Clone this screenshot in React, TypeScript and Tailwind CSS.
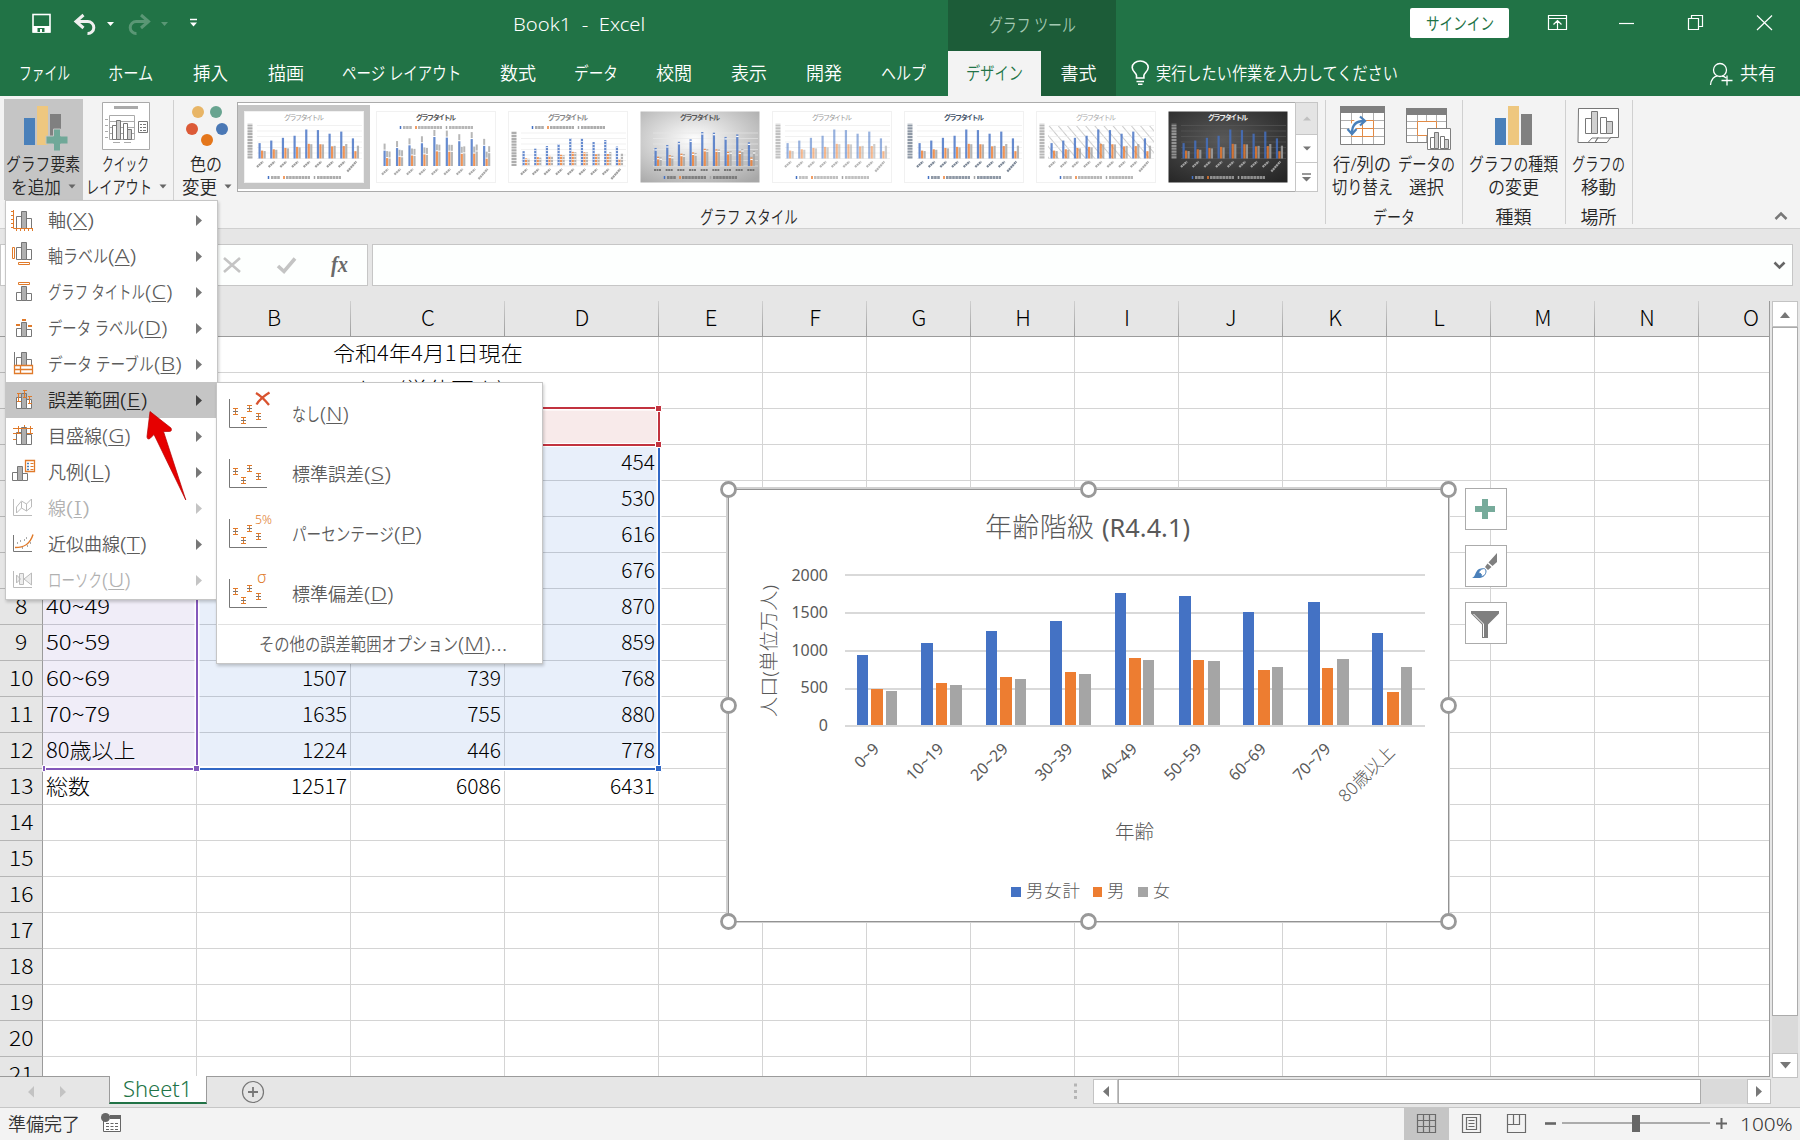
import React, { useLayoutEffect, useRef, useState } from 'react';

const UI = "font-['Noto_Sans','Noto_Sans_CJK_JP',sans-serif] font-[350]";
const CELL = "font-['Noto_Sans_CJK_JP',sans-serif] font-light";

/* One line of text, condensed or widened to an exact advance width. */
function Fit({ w, children, className = '' }: { w: number; children: React.ReactNode; className?: string }) {
  const ref = useRef<HTMLSpanElement>(null);
  const [scale, setScale] = useState(1);
  useLayoutEffect(() => {
    if (ref.current) setScale(w / ref.current.offsetWidth);
  }, [w]);
  return (
    <span className={'inline-flex shrink-0 items-center whitespace-nowrap leading-none ' + className} style={{ width: w }}>
      <span ref={ref} className="inline-block origin-left" style={{ transform: `scaleX(${scale})` }}>
        {children}
      </span>
    </span>
  );
}

const Gap = ({ w }: { w: number }) => <span className="shrink-0" style={{ width: w }} />;

/* ---------- Title bar and tabs ---------- */

function TitleBar() {
  return (
    <div className="flex h-[51px] text-white">
      <svg className="shrink-0" width="513" height="51" fill="none">
        <rect x="33" y="14.500" width="17" height="17.500" stroke="#fff" strokeWidth="1.600" />
        <path d="M33 26h17v6.500H33z" fill="#fff" />
        <path d="M37.500 28h7v4h-2.500v-3h-2v3h-2.500z" fill="#217346" />
        <path d="M83.500 15l-7.500 6.500 7.500 6.500M76.500 21.500h11a6 6 0 0 1 6.300 6.200 6 6 0 0 1-6.300 5.800" stroke="#f0f0f0" strokeWidth="3" />
        <path d="M107 22h7l-3.500 4z" fill="#fff" />
        <path d="M141 15l7.500 6.500-7.500 6.500M148 21.500h-11.500a6 6 0 0 0-6.300 6.200 6 6 0 0 0 6.300 5.800" stroke="#5a9775" strokeWidth="3" />
        <path d="M161 22h7l-3.500 4z" fill="#5a9775" />
        <path d="M190 19.500h7" stroke="#fff" strokeWidth="1.500" />
        <path d="M190 22.500h7l-3.500 4z" fill="#fff" />
      </svg>
      <div className="flex w-[435px] items-center pb-[2px] text-[19px]">
        <Fit w={132} className="whitespace-pre">{'Book1  -  Excel'}</Fit>
      </div>
      <div className="flex w-[168px] items-center justify-center bg-[#1c5c38] pb-[2px] text-[18px] text-[#a3c9b2]">
        <Fit w={87}>グラフ ツール</Fit>
      </div>
      <div className="w-[294px]" />
      <div className="mt-[8px] flex h-[30px] w-[99px] items-center justify-center rounded-[2px] bg-white text-[17px] font-normal text-[#217346]">
        <Fit w={68}>サインイン</Fit>
      </div>
      <svg className="shrink-0" width="291" height="51" viewBox="1509 0 291 51" fill="none" stroke="#fff" strokeWidth="1.200">
        <path d="M1548.500 15.500h18v14h-18zM1548.500 18.500h18M1557.500 29v-8M1553.500 24.500l4-4 4 4" />
        <path d="M1619 23.500h15" />
        <path d="M1688.500 18.500h10v11h-10zM1691.500 18v-2.500h11v11h-3.500" />
        <path d="M1757 15.500l15 14.500M1772 15.500l-15 14.500" />
      </svg>
    </div>
  );
}

const TABS: [string, number, number][] = [
  ['ファイル', 19, 51], ['ホーム', 38, 45], ['挿入', 40, 35], ['描画', 40, 36], ['ページ レイアウト', 38, 119], ['数式', 39, 36],
  ['データ', 38, 44], ['校閲', 38, 36], ['表示', 39, 36], ['開発', 39, 36], ['ヘルプ', 39, 45],
];

function TabBar() {
  return (
    <div className="flex h-[45px] items-stretch text-[18px] text-white">
      <div className="flex w-[948px] items-center pb-[2px]">
        {TABS.map(([label, gap, w]) => (
          <React.Fragment key={label}>
            <Gap w={gap} />
            <Fit w={w}>{label}</Fit>
          </React.Fragment>
        ))}
      </div>
      <div className="flex w-[93px] items-center justify-center bg-[#f3f3f3] pb-[2px] text-[#217346]"><Fit w={57}>デザイン</Fit></div>
      <div className="flex w-[75px] items-center justify-center bg-[#1c5c38] pb-[2px]"><Fit w={36}>書式</Fit></div>
      <svg className="shrink-0" width="40" height="45" viewBox="1116 51 40 45" fill="none" stroke="#fff" strokeWidth="1.600">
        <path d="M1136.500 78v-2.500c0-2.500-4.300-4-4.300-8a7.800 6.300 0 0 1 16 0c0 4-4.300 5.500-4.300 8V78zM1136.500 81.500h7.500M1138 84.300h4.500" />
      </svg>
      <Fit w={242} className="pb-[2px]">実行したい作業を入力してください</Fit>
      <svg className="ml-auto shrink-0" width="40" height="45" viewBox="1700 51 40 45" fill="none" stroke="#fff" strokeWidth="1.300">
        <circle cx="1720" cy="70" r="6.500" />
        <path d="M1710.500 85c.5-6 4-9 7-9.200M1722 76c2 .3 3 1 4 2M1727 75.500v10M1721.500 80.500h11" />
      </svg>
      <Fit w={36} className="mr-[24px] pb-[2px]">共有</Fit>
    </div>
  );
}

/* ---------- Ribbon ---------- */

const TOTAL = [935, 1090, 1256, 1382, 1762, 1726, 1507, 1635, 1224];
const MALE = [481, 560, 640, 706, 892, 867, 739, 755, 446];
const FEMALE = [454, 530, 616, 676, 870, 859, 768, 880, 778];

type Look = { title: string; text: string; legendTop?: boolean; kind?: string };
const LOOKS: Look[] = [
  { title: '#999', text: '#777' },
  { title: '#555', text: '#888', legendTop: true, kind: 'labels' },
  { title: '#888', text: '#777', legendTop: true, kind: 'dash' },
  { title: '#555', text: '#555', kind: 'grey' },
  { title: '#999', text: '#999', kind: 'pale' },
  { title: '#44546a', text: '#44546a' },
  { title: '#aaa', text: '#888', kind: 'hatch' },
  { title: '#eee', text: '#ccc', kind: 'dark' },
];

function Thumb({ look, id }: { look: Look; id: number }) {
  const dark = look.kind === 'dark';
  const shaded = dark || look.kind === 'grey';
  const base = look.legendTop || look.kind === 'grey' ? 55 : 47.5;
  const span = look.kind === 'labels' ? 29 : look.legendTop ? 28 : look.kind === 'grey' ? 34 : 29;
  const left = look.kind === 'labels' ? 6 : 13;
  const step = (118 - left) / 9;
  const data = [TOTAL, MALE, FEMALE];
  const cols = ['#4472c4', '#ed7d31', '#a5a5a5'];
  return (
    <svg width="120" height="72" viewBox="0 0 120 72" className="shrink-0">
      <defs>
        <radialGradient id={'bg' + id} cx="0.45" cy="0.4" r="0.75">
          <stop offset="0" stopColor={dark ? '#595959' : '#fff'} />
          <stop offset="1" stopColor={dark ? '#262626' : '#a8a8a8'} />
        </radialGradient>
        <pattern id={'hatch' + id} width="7" height="7" patternUnits="userSpaceOnUse" patternTransform="rotate(-40)">
          <path d="M0 0V7" stroke="#ccc" strokeWidth="2" />
        </pattern>
      </defs>
      <rect x="0.500" y="0.500" width="119" height="71" fill={shaded ? `url(#bg${id})` : '#fff'} stroke={shaded ? 'none' : '#f1f1f1'} />
      {look.kind === 'hatch' && <rect x="12" y="15" width="106" height="33" fill={`url(#hatch${id})`} />}
      {look.kind !== 'labels' &&
        [0, 1, 2, 3, 4, 5, 6].map((n) => (
          <path key={n} d={`M${left} ${base - n * 5.500}H118`} stroke={dark ? '#5a5a5a' : '#e8e8e8'} strokeWidth="0.600" />
        ))}
      {look.kind !== 'labels' && look.kind !== 'grey' && (
        <path d={`M6 ${base}V${base - 35}`} stroke={look.text} strokeWidth="5" strokeDasharray="2.200 0.700" opacity="0.6" />
      )}
      {data.map((serie, j) =>
        serie.map((v, i) => {
          const h = (v / 1762) * span;
          const x = left + 1.500 + i * step + j * 2.500;
          return (
            <g key={i + '-' + j}>
              <rect x={x} y={base - h} width="2.200" height={h} fill={cols[j]} opacity={look.kind === 'pale' ? 0.55 : 0.82} />
              {look.kind === 'dash' && <path d={`M${x + 1.100} ${base}V${base - h}`} stroke="#fff" strokeWidth="2.400" strokeDasharray="0.800 2.200" />}
              {look.kind === 'labels' && <path d={`M${x + 1.100} ${base - h - 1}v-6`} stroke="#999" strokeWidth="2" opacity="0.7" />}
              {look.kind === 'grey' && <path d={`M${x} ${base - h + 2}h2.500`} stroke="#fff" strokeWidth="1.200" />}
            </g>
          );
        }),
      )}
      {TOTAL.map((_, i) => (
        <path key={i} d={look.kind === 'grey' ? `M${left + 1 + i * step} 59h7` : `M${left + i * step - (i === 8 ? 3 : 0)} ${base + (i === 8 ? 13 : 8.500)}L${left + 6 + i * step} ${base + 3}`} stroke={look.text} strokeWidth="2.200" strokeDasharray="2 0.500" opacity="0.7" />
      ))}
      <text x="60" y="9" textAnchor="middle" fontSize="7" fontWeight={look.title === '#999' || look.title === '#aaa' ? 400 : 700} fill={look.title} textLength="40" className="whitespace-pre">グラフ タイトル</text>
      <g transform={look.legendTop ? 'translate(0 -50)' : ''}>
        <path d="M24.500 65v3" stroke="#4472c4" strokeWidth="1.500" />
        <path d="M27 66.500h9M42 66.500h24M73 66.500h24" stroke={look.text} strokeWidth="3" strokeDasharray="2.600 0.500" opacity="0.6" />
        <path d="M40 65v3" stroke="#ed7d31" strokeWidth="1.500" />
        <path d="M70.500 65v3" stroke="#a5a5a5" strokeWidth="1.500" />
      </g>
    </svg>
  );
}

function RibbonButton({ x, w, l1, l2, pad1, pad2, arrow, active, children }: {
  x: number; w: number; l1: [string, number]; l2: [string, number]; pad1: number; pad2: number; arrow?: number; active?: boolean; children: React.ReactNode;
}) {
  return (
    <div className={'flex h-[104px] shrink-0 flex-col text-[18px] text-[#262626] ' + (active ? 'bg-[linear-gradient(#f3f3f3_3px,#c5c5c5_3px)]' : '')} style={{ width: w }}>
      <svg width={w} height="56" viewBox={`${x} 96 ${w} 56`} fill="none" className="shrink-0">{children}</svg>
      <div className="flex h-[23px] items-center"><Gap w={pad1} /><Fit w={l1[1]}>{l1[0]}</Fit></div>
      <div className="flex h-[23px] items-center">
        <Gap w={pad2} />
        <Fit w={l2[1]}>{l2[0]}</Fit>
        {arrow !== undefined && (
          <svg width="8" height="5" style={{ marginLeft: arrow }}><path d="M0.500 0.500h7L4 4.500z" fill="#666" /></svg>
        )}
      </div>
    </div>
  );
}

function Group({ w, label, lw, children }: { w: number; label: string; lw: number; children: React.ReactNode }) {
  return (
    <div className="relative flex h-[132px] shrink-0 flex-col" style={{ width: w }}>
      <div className="flex h-[109px]">{children}</div>
      <div className="flex h-[23px] items-center justify-center pr-[2px] text-[18px] text-[#262626]"><Fit w={lw}>{label}</Fit></div>
      <div className="absolute right-0 top-[4px] h-[124px] w-px bg-[#d0d0d0]" />
    </div>
  );
}

function Ribbon() {
  return (
    <div className="flex h-[133px] border-b border-[#d0d0d0] bg-[#f3f3f3]">
      <div className="relative flex w-[174px] shrink-0 pl-[4px]">
        <RibbonButton x={4} w={79} l1={['グラフ要素', 74]} l2={['を追加', 50]} pad1={2} pad2={7} arrow={7} active>
          <path d="M24 118h11v27H24z" fill="#4a80ba" />
          <path d="M37 106h11v39H37z" fill="#eec77f" />
          <path d="M50 114h11v23H50z" fill="#808080" />
          <path d="M53.500 129h7v7h7.500v8h-7.500v7h-7v-7H46v-8h7.500z" fill="#70a898" stroke="#c5c5c5" />
        </RibbonButton>
        <RibbonButton x={83} w={90} l1={['クイック', 47]} l2={['レイアウト', 66]} pad1={19} pad2={3} arrow={7}>
          <path d="M102.500 102.500h47v47h-47z" fill="#fff" stroke="#aaa" />
          <path d="M114 107.500h24" stroke="#aaa" strokeWidth="3" />
          <path d="M109.500 115.500h25v24h-25zM110 121.500h24M110 127.500h24M110 133.500h24M105 119.500h3M105 125.500h3M105 131.500h3M105 137.500h3M113 142.500h7M124 142.500h7" stroke="#aaa" />
          <path d="M112.500 125.500h4v14h-4zM123.500 123.500h4v16h-4z" fill="#fff" stroke="#777" />
          <path d="M116.500 120.500h4v19h-4zM127.500 129.500h4v10h-4z" fill="#ccc" stroke="#777" />
          <path d="M138.500 121.500h9v11h-9zM140 124.500h2M143 124.500h3M140 127.500h2M143 127.500h3M140 130.500h2M143 130.500h3" stroke="#777" />
        </RibbonButton>
        <div className="absolute right-0 top-[4px] h-[100px] w-px bg-[#d0d0d0]" />
      </div>
      <RibbonButton x={174} w={63} l1={['色の', 32]} l2={['変更', 35]} pad1={16} pad2={8} arrow={7}>
        <circle cx="198" cy="112" r="6" fill="#e8b566" />
        <circle cx="216" cy="112" r="6" fill="#68a490" />
        <circle cx="192" cy="129" r="6" fill="#dc5a37" />
        <circle cx="222" cy="129" r="6" fill="#4a78b5" />
        <circle cx="207" cy="140" r="6" fill="#e4761b" />
      </RibbonButton>
      <div className="relative flex w-[1089px] flex-col">
        <div className="mt-[6px] flex h-[90px] w-[1081px]">
          <div className="flex w-[1060px] items-center border border-[#ababab] bg-white">
            {LOOKS.map((look, i) => (
              <div key={i} className={'flex h-[84px] w-[132px] shrink-0 items-center justify-center ' + (i === 0 ? 'bg-[#c5c5c5]' : '')}>
                <Thumb look={look} id={i} />
              </div>
            ))}
          </div>
          <div className="-ml-px flex w-[23px] flex-col">
            <div className="flex h-[33px] items-center justify-center border border-[#c6c6c6] bg-[#e4e4e4]"><svg width="8" height="5"><path d="M0 4.500h8L4 .5z" fill="#c0c0c0" /></svg></div>
            <div className="-mt-px flex h-[30px] items-center justify-center border border-[#c6c6c6] bg-white"><svg width="8" height="5"><path d="M0 .5h8L4 4.500z" fill="#777" /></svg></div>
            <div className="-mt-px flex h-[30px] items-center justify-center border border-[#c6c6c6] bg-white"><svg width="9" height="9"><path d="M0 1h9" stroke="#777" strokeWidth="1.500" /><path d="M0 4h9L4.500 8.500z" fill="#777" /></svg></div>
          </div>
        </div>
        <div className="mt-[13px] flex h-[23px] items-center pl-[463px] text-[18px] text-[#262626]"><Fit w={98}>グラフ スタイル</Fit></div>
        <div className="absolute right-0 top-[4px] h-[124px] w-px bg-[#d0d0d0]" />
      </div>
      <Group w={137} label="データ" lw={42}>
        <RibbonButton x={1326} w={71} l1={['行/列の', 58]} l2={['切り替え', 61]} pad1={7} pad2={6}>
          <path d="M1340.500 107h44v37.500h-44z" fill="#fff" stroke="#7f7f7f" />
          <path d="M1351.500 112v32M1362.500 112v32M1373.500 112v32M1341 120.500h43M1341 128.500h43M1341 136.500h43" stroke="#b0b0b0" />
          <path d="M1340 106h45v7h-45z" fill="#7f7f7f" />
          <path d="M1351.500 120.500h22v16h-22zM1362.500 121v15M1352 128.500h21" stroke="#e28a45" />
          <path d="M1352 133c0-8 4-12 12-12" stroke="#fff" strokeWidth="6" />
          <path d="M1352 133c0-8 4-12 12-12M1360 116.500l5 4.500-5 4.500M1347.500 129l4.500 5 4.500-5" stroke="#4a80ba" strokeWidth="2.300" />
        </RibbonButton>
        <RibbonButton x={1397} w={58} l1={['データの', 57]} l2={['選択', 35]} pad1={1} pad2={12}>
          <path d="M1406.500 109h40v33.500h-40z" fill="#fff" stroke="#7f7f7f" />
          <path d="M1417.500 114v28M1426.500 114v28M1436.500 114v28M1407 121.500h39M1407 128.500h39M1407 135.500h39" stroke="#b0b0b0" />
          <path d="M1406 108h41v7h-41z" fill="#7f7f7f" />
          <path d="M1417.500 121.500h19v14h-19z" stroke="#e28a45" fill="#fff" />
          <path d="M1427.500 128.500h23v21h-23z" fill="#fff" stroke="#808080" />
          <path d="M1430.500 137.500h4v11h-4zM1440.500 136.500h4v12h-4z" fill="#fff" stroke="#777" />
          <path d="M1434.500 132.500h4v16h-4zM1444.500 139.500h4v9h-4z" fill="#ccc" stroke="#777" />
        </RibbonButton>
      </Group>
      <Group w={103} label="種類" lw={36}>
        <RibbonButton x={1463} w={102} l1={['グラフの種類', 89]} l2={['の変更', 51]} pad1={6} pad2={25}>
          <path d="M1495 118h11v27h-11z" fill="#4a80ba" />
          <path d="M1508 106h11v39h-11z" fill="#eec77f" />
          <path d="M1521 114h11v31h-11z" fill="#808080" />
        </RibbonButton>
      </Group>
      <Group w={67} label="場所" lw={36}>
        <RibbonButton x={1566} w={65} l1={['グラフの', 53]} l2={['移動', 35]} pad1={6} pad2={15}>
          <path d="M1578.500 108.500h40v29h-8l-3.500 5h-12l3-5-3 5h-17z" fill="#fff" stroke="#777" />
          <path d="M1588 142.500l4-4.500h19" stroke="#777" />
          <path d="M1585.500 118.500h6v15h-6zM1600.500 117.500h6v16h-6z" fill="#fff" stroke="#777" />
          <path d="M1591.500 111.500h6v22h-6zM1606.500 121.500h6v12h-6z" fill="#d0d0d0" stroke="#777" />
        </RibbonButton>
      </Group>
      <div className="flex flex-1 items-end justify-end pb-[8px] pr-[12px]">
        <svg width="14" height="9" fill="none"><path d="M1.500 8L7 2.500 12.500 8" stroke="#777" strokeWidth="2.500" /></svg>
      </div>
    </div>
  );
}

function FormulaBar() {
  return (
    <div className="flex h-[57px] shrink-0 pt-[15px]">
      <div className="h-[42px] w-[190px] border border-[#c6c6c6] bg-white" />
      <div className="ml-[4px] h-[42px] w-[174px] border border-[#c6c6c6] bg-[#fdfffe]">
        <svg width="172" height="40" viewBox="195 245 172 40" fill="none">
          <path d="M224 258l16 14M240 258l-16 14" stroke="#c4c4c4" strokeWidth="2.600" />
          <path d="M278 266l6 5.500 11-13" stroke="#c4c4c4" strokeWidth="3.600" />
          <text x="331" y="272" fontSize="23" fontStyle="italic" fontWeight="700" fill="#6a6a6a" textLength="17" lengthAdjust="spacingAndGlyphs" className="font-['Liberation_Serif',serif]">fx</text>
        </svg>
      </div>
      <div className="ml-[4px] flex h-[42px] w-[1421px] items-center justify-end border border-[#c6c6c6] bg-[#fdfffe] pr-[6px]">
        <svg width="13" height="9" fill="none"><path d="M1.500 1.500l5 5 5-5" stroke="#666" strokeWidth="2.600" /></svg>
      </div>
    </div>
  );
}

/* ---------- Worksheet ---------- */

const COLS: [string, number][] = [
  ['A', 154], ['B', 154], ['C', 154], ['D', 154], ['E', 104], ['F', 104], ['G', 104], ['H', 104], ['I', 104], ['J', 104], ['K', 104],
  ['L', 104], ['M', 104], ['N', 104], ['O', 71],
];
const AGES = ['0~9', '10~19', '20~29', '30~39', '40~49', '50~59', '60~69', '70~79', '80歳以上'];

function cell(row: number, col: number): React.ReactNode {
  if (row >= 4 && row <= 12) {
    const i = row - 4;
    /* Cells that lie fully behind the open menus stay empty. */
    if ((col === 0 && row < 8) || (col < 3 && col > 0 && row < 10)) return '';
    if (col === 0) return <Fit w={row === 12 ? 89 : 64}>{AGES[i]}</Fit>;
    return [0, TOTAL[i], MALE[i], FEMALE[i]][col] ?? '';
  }
  if (row === 13) return [<Fit key="sum" w={44}>総数</Fit>, '12517', '6086', '6431'][col] ?? '';
  return '';
}

function fill(row: number, col: number): string {
  if (row >= 4 && row <= 12 && col === 0) return 'bg-[#f0edf8] border-[#c5c3cf]';
  if (row >= 4 && row <= 12 && col <= 3) return 'bg-[#e8effa] border-[#c0c7d2]';
  if (row === 3 && col >= 1 && col <= 3) return 'bg-[#f8eaea] border-[#d4d4d4]';
  return 'border-[#d4d4d4]';
}

function Sheet() {
  return (
    <div className={'h-[776px] w-[1770px] shrink-0 overflow-hidden border-r border-[#9b9b9b] bg-white text-black ' + CELL}>
      <div className="flex h-[36px] border-b border-[#9b9b9b] bg-[#e6e6e6] text-[22px]">
        <div className="w-[43px] shrink-0 border-r border-[#bbb]" />
        {COLS.map(([name, w]) => (
          <div key={name} className="flex shrink-0 items-center justify-center bg-[linear-gradient(#d0d0d0,#9b9b9b)] bg-[length:1px_100%] bg-right bg-no-repeat pb-[5px] leading-none" style={{ width: name === 'O' ? 104 : w }}>
            {name}
          </div>
        ))}
      </div>
      {Array.from({ length: 21 }, (_, k) => k + 1).map((row) => (
        <div key={row} className="flex h-[36px] text-[21px] leading-none">
          <div className="flex w-[43px] shrink-0 items-center justify-center border-b border-r border-b-[#b5b5b5] border-r-[#9b9b9b] bg-[#e6e6e6] pb-[3px]">
            <Fit w={row < 10 ? 12 : 24}>{row}</Fit>
          </div>
          {COLS.map(([name, w], col) => {
            if (row <= 2 && (col === 2 || col === 3)) return null;
            if (row <= 2 && col === 1)
              return (
                <div key={name} className="flex w-[462px] shrink-0 items-center justify-center border-b border-r border-[#d4d4d4] pb-[5px] pl-[1px]">
                  <Fit w={row === 1 ? 190 : 152}>{row === 1 ? '令和4年4月1日現在' : '人口(単位万人)'}</Fit>
                </div>
              );
            return (
              <div key={name} className={'flex shrink-0 items-center border-b border-r pb-[3px] ' + (col ? 'justify-end pr-[3px] ' : 'pl-[3px] ') + fill(row, col)} style={{ width: w }}>
                {cell(row, col)}
              </div>
            );
          })}
        </div>
      ))}
    </div>
  );
}

function RangeOutlines() {
  return (
    <svg className="pointer-events-none absolute left-0 top-0" width="700" height="800" fill="none">
      <path d="M199 768.500H659M659 447V768" stroke="#fff" strokeWidth="5" />
      <path d="M199 769H659V447" stroke="#3168c6" strokeWidth="2" />
      <path d="M44 768.500H197V440" stroke="#fff" strokeWidth="5" />
      <path d="M44 769H197V440" stroke="#8458bb" strokeWidth="2" />
      <path d="M197 408.500H659V445H197z" stroke="#fff" strokeWidth="4" />
      <path d="M197 408H659V445H197z" stroke="#c2333f" strokeWidth="2" />
      <path d="M655.500 405.500h6v6h-6zM655.500 441.500h6v6h-6z" fill="#c2333f" stroke="#fff" />
      <path d="M655.500 765.500h6v6h-6z" fill="#3168c6" stroke="#fff" />
      <path d="M193.500 765.500h6v6h-6zM42.500 765.500h3v6h-3z" fill="#8458bb" stroke="#fff" />
    </svg>
  );
}

function VScroll() {
  return (
    <div className="ml-[2px] flex h-[777px] w-[26px] flex-col bg-[#dadada]">
      <div className="flex h-[26px] items-center justify-center border border-[#c3c3c3] bg-white"><svg width="10" height="7"><path d="M0 7h10L5 1z" fill="#777" /></svg></div>
      <div className="h-[689px] border border-[#ababab] bg-white" />
      <div className="flex-1" />
      <div className="flex h-[25px] items-center justify-center border border-[#c3c3c3] bg-white"><svg width="11" height="7"><path d="M0 0h11L5.500 6.500z" fill="#777" /></svg></div>
    </div>
  );
}

/* ---------- Chart object ---------- */

function Chart() {
  const y = (v: number) => 725 - (v / 2000) * 150;
  return (
    <svg className="absolute left-[718px] top-[478px] font-['Noto_Sans','Noto_Sans_CJK_JP',sans-serif] font-normal" width="742" height="454" viewBox="718 478 742 454" fill="none">
      <rect x="727.500" y="488.500" width="721" height="433" stroke="#d0d0d0" strokeWidth="3" />
      <rect x="728.500" y="489.500" width="720" height="432" fill="#fff" stroke="#939393" />
      <text x="985" y="537" fontSize="27" fontWeight="300" fill="#595959" textLength="109" className="font-['Noto_Sans_CJK_JP']">年齢階級</text>
      <text x="1102" y="537" fontSize="25" fill="#595959" textLength="88" lengthAdjust="spacingAndGlyphs">(R4.4.1)</text>
      {[0, 500, 1000, 1500, 2000].map((v) => (
        <g key={v}>
          <path d={`M845 ${[726, 689, 651, 613, 575][v / 500]}H1425`} stroke="#d9d9d9" strokeWidth="2" />
          <text x="828" y={y(v) + 5.500} fontSize="16" fill="#595959" textAnchor="end">{v}</text>
        </g>
      ))}
      {[TOTAL, MALE, FEMALE].map((serie, j) =>
        serie.map((v, i) => {
          const top = Math.round(y(v));
          const x = Math.round(857 + i * 64.400 + j * 14.400);
          return <rect key={i + '-' + j} x={x} y={top} width={(i + j) % 2 ? 12 : 11} height={725 - top} fill={['#4472c4', '#ed7d31', '#a5a5a5'][j]} />;
        }),
      )}
      {AGES.map((t, i) => (
        <text key={t} transform={`translate(${880 + i * 64.500} ${i === 8 ? 753 : 750}) rotate(-45)`} fontSize={i === 8 ? 17.500 : 16} fontWeight={i === 8 ? 300 : 400} fill="#595959" textAnchor="end" textLength={i === 0 ? 27 : i === 8 ? 71 : 45} lengthAdjust="spacingAndGlyphs">{t}</text>
      ))}
      <text transform="translate(776 717) rotate(-90)" fontSize="19" fontWeight="300" fill="#595959" textLength="132" lengthAdjust="spacingAndGlyphs">人口(単位万人)</text>
      <text x="1115" y="839" fontSize="19.500" fontWeight="300" fill="#595959">年齢</text>
      <path d="M1011 887h10v10h-10z" fill="#4472c4" />
      <text x="1026" y="897" fontSize="17.500" fontWeight="300" fill="#595959" textLength="54">男女計</text>
      <path d="M1093 887h9v10h-9z" fill="#ed7d31" />
      <text x="1107" y="897" fontSize="17.500" fontWeight="300" fill="#595959">男</text>
      <path d="M1138 887h10v10h-10z" fill="#a5a5a5" />
      <text x="1153" y="897" fontSize="17" fontWeight="300" fill="#595959">女</text>
      {[728.500, 1088.500, 1448.500].map((cx) =>
        [489.500, 705.500, 921.500].map((cy) =>
          cx === 1088.500 && cy === 705.500 ? null : <circle key={cx + '-' + cy} cx={cx} cy={cy} r="7" fill="#fff" stroke="#999" strokeWidth="2.800" />,
        ),
      )}
    </svg>
  );
}

function ChartButtons() {
  const box = 'flex h-[42px] w-[42px] items-center justify-center border border-[#ababab] bg-white';
  return (
    <div className="absolute left-[1465px] top-[488px] flex flex-col gap-[15px]">
      <div className={box}><svg width="40" height="40" viewBox="1466 489 40 40"><path d="M1482 499h6v7h7v6h-7v7h-6v-7h-7v-6h7z" fill="#77ab9b" /></svg></div>
      <div className={box}>
        <svg width="40" height="40" viewBox="1466 546 40 40">
          <path d="M1497 553v9l-4.500 4-4-3.500zM1487.500 563.500l4 3.500-3.500 3-3-3z" fill="#7f7f7f" />
          <path d="M1472 578c4-1 3-9 9-9.500s6.500 8-1 9.500z" fill="#4a80ba" />
          <path d="M1478.500 573c1-4 7-6.500 7.500-2 0 4-3 5.500-5 5.500 1-2 0-3.500-2.500-3.500z" fill="#fff" stroke="#4a80ba" />
        </svg>
      </div>
      <div className={box}>
        <svg width="40" height="40" viewBox="1466 603 40 40">
          <path d="M1471 611h28v2.500l-11 11V638h-6v-13.500l-11-11z" fill="#7f7f7f" />
          <path d="M1473.500 614l10 10v13" stroke="#fff" fill="none" />
        </svg>
      </div>
    </div>
  );
}

/* ---------- Menus ---------- */

const bars = (
  <>
    <path d="M16.500 216.500h5v12h-5zM26.500 218.500h5v10h-5z" fill="#fff" stroke="#777" />
    <path d="M21.500 211.500h5v17h-5z" fill="#b0b0b0" stroke="#777" />
  </>
);
const lowBars = (
  <>
    <path d="M16.500 220.500h5v8h-5zM26.500 221.500h5v7h-5z" fill="#fff" stroke="#777" />
    <path d="M21.500 214.500h5v14h-5z" fill="#b0b0b0" stroke="#777" />
  </>
);
const O = '#e07a2a';

function Caption({ label, lw, k, kw, tail = '' }: { label: string; lw: number; k: string; kw: number; tail?: string }) {
  return (
    <>
      <Fit w={lw}>{label}</Fit>
      <Fit w={kw} className="text-[20px]">(<span className="underline decoration-1 underline-offset-2">{k}</span>){tail}</Fit>
    </>
  );
}

/* Glyphs share a 36px-high row whose vertical origin is y=202. */
const MENU: { label: string; k: string; lw: number; kw: number; off?: boolean; on?: boolean; icon: React.ReactNode }[] = [
  { label: '軸', k: 'X', lw: 18, kw: 28, icon: <>{bars}<path d="M13.500 210v18.500H33M11 211.500h2M11 215.500h2M11 219.500h2M11 223.500h2M11 227.500h2M16.500 229v2M20.500 229v2M24.500 229v2M28.500 229v2M32.500 229v2" stroke={O} /></> },
  { label: '軸ラベル', k: 'A', lw: 60, kw: 28, icon: <><g transform="translate(0 -5)">{bars}</g><path d="M12.500 211.500h2v11h-2zM18.500 226.500h11v2h-11z" fill="#fff" stroke={O} /></> },
  { label: 'グラフ タイトル', k: 'C', lw: 97, kw: 28, icon: <>{lowBars}<path d="M18.500 210.500h11v2h-11z" fill="#fff" stroke={O} /></> },
  { label: 'データ ラベル', k: 'D', lw: 90, kw: 29, icon: <>{lowBars}<path d="M16 217h4M22 212h4M28 218h4" stroke={O} strokeWidth="2" /></> },
  { label: 'データ テーブル', k: 'B', lw: 106, kw: 28, icon: <><g transform="translate(0 -3)">{bars}</g><path d="M14.500 208v14" stroke="#777" /><path d="M14.500 221.500h18v8h-18zM14.500 225.500h18M20.500 222v8" fill="#fff" stroke={O} strokeWidth="1.300" /></> },
  { label: '誤差範囲', k: 'E', lw: 72, kw: 27, on: true, icon: <><path d="M16.500 217.500h5v11h-5zM26.500 219.500h5v9h-5z" fill="#fff" stroke="#777" /><path d="M21.500 213.500h5v15h-5z" fill="#b0b0b0" stroke="#777" /><path d="M18.500 214v7M17 213.500h4M17 221.500h4M24.500 210v7M23 210.500h4M23 217.500h4M29.500 216v7M28 216.500h4M28 223.500h4" stroke={O} /></> },
  { label: '目盛線', k: 'G', lw: 54, kw: 29, icon: <>{bars}<path d="M13 212.500h20M13 217.500h8M27 217.500h6M13 223.500h3M18.500 210v7M24.500 209v2M30.500 210v8" stroke={O} /></> },
  { label: '凡例', k: 'L', lw: 36, kw: 26, icon: <><g transform="translate(-4 0)">{lowBars}</g><path d="M25.500 208.500h9v11h-9z" fill="#fff" stroke={O} strokeWidth="1.300" /><path d="M27 211.500h2M27 214.500h2M27 217.500h2" stroke="#4a80ba" strokeWidth="1.500" /><path d="M30.500 211.500h3M30.500 214.500h3M30.500 217.500h3" stroke={O} /></> },
  { label: '線', k: 'I', lw: 18, kw: 23, off: true, icon: <path d="M13.500 211v16.500H32M16.500 219v6l5-5 5 3 5-4v-8l-5 5-5-3zM21.500 214v6M26.500 216v7" stroke="#bbb" /> },
  { label: '近似曲線', k: 'T', lw: 72, kw: 27, icon: <><path d="M13.500 211v16.500H32" stroke="#777" /><path d="M15 223.500c9 0 15-3 18-13" stroke={O} strokeWidth="1.400" /><path d="M17 219h1M20 217h1M24 216h1M22 224h1M27 222h1M30 219h1M26 214h1" stroke="#555" /></> },
  { label: 'ローソク', k: 'U', lw: 54, kw: 29, off: true, icon: <><path d="M13.500 211v16.500H32" stroke="#bbb" /><path d="M16.500 215v8l4-4zM24 219l7.500-6v12zM19.500 213.500h4v11h-4z" fill="#eee" stroke="#bbb" /></> },
];

function AddElementMenu() {
  return (
    <div className={'absolute left-[5px] top-[200px] w-[213px] border border-[#c6c6c6] bg-white py-px text-[18px] shadow-[1px_2px_3px_rgba(0,0,0,0.2)] ' + UI}>
      {MENU.map((m) => (
        <div key={m.k} className={'flex h-[36px] items-center ' + (m.on ? 'bg-[#c5c5c5] text-[#262626]' : m.off ? 'text-[#b1b1b1]' : 'text-[#5c5c5c]')}>
          <svg width="42" height="36" viewBox="6 202 42 36" fill="none" className="shrink-0">{m.icon}</svg>
          <Caption label={m.label} lw={m.lw} k={m.k} kw={m.kw} />
          <svg width="6" height="11" className="ml-auto mr-[15px]"><path d="M0 0v11l6-5.500z" fill={m.off ? '#c4c4c4' : m.on ? '#444' : '#777'} /></svg>
        </div>
      ))}
    </div>
  );
}

const ErrBar = ({ x, y }: { x: number; y: number }) => (
  <>
    <path d={`M${x - 2.500} ${y - 3}h5M${x - 2.500} ${y + 3}h5M${x} ${y - 3}v6`} stroke={O} />
    <path d={`M${x - 2.500} ${y}h5`} stroke="#777" />
  </>
);

const SUB: { label: string; k: string; lw: number; kw: number; extra?: React.ReactNode }[] = [
  { label: 'なし', k: 'N', lw: 28, kw: 29, extra: <path d="M256 393c5 3 9 7 13 12M269.500 392.500c-5 3-10 7-13 12" stroke="#d9532f" strokeWidth="2.300" /> },
  { label: '標準誤差', k: 'S', lw: 72, kw: 27 },
  { label: 'パーセンテージ', k: 'P', lw: 102, kw: 28, extra: <text x="255" y="404" fontSize="12" fill={O} textLength="17" lengthAdjust="spacingAndGlyphs">5%</text> },
  { label: '標準偏差', k: 'D', lw: 72, kw: 29, extra: <text x="257" y="403" fontSize="16" fill={O}>σ</text> },
];

function ErrorBarMenu() {
  return (
    <div className={'absolute left-[216px] top-[382px] w-[327px] border border-[#c6c6c6] bg-white pt-[2px] text-[18px] text-[#5c5c5c] shadow-[1px_2px_3px_rgba(0,0,0,0.2)] ' + UI}>
      {SUB.map((s) => (
        <div key={s.k} className="flex h-[60px] items-center">
          <svg width="75" height="60" viewBox="217 385 75 60" fill="none" className="shrink-0">
            <path d="M229.500 399v28.500H267" stroke="#777" />
            <ErrBar x={235.500} y={411.500} />
            <ErrBar x={243.500} y={420.500} />
            <ErrBar x={249.500} y={408.500} />
            <ErrBar x={258.500} y={416.500} />
            {s.extra}
          </svg>
          <div className="flex items-center pb-[2px]"><Caption label={s.label} lw={s.lw} k={s.k} kw={s.kw} /></div>
        </div>
      ))}
      <div className="mx-px -mt-px h-px bg-[#e1e1e1]" />
      <div className="flex h-[38px] items-center pb-px pl-[42px]">
        <Caption label="その他の誤差範囲オプション" lw={199} k="M" kw={49} tail="..." />
      </div>
    </div>
  );
}

/* ---------- Bottom bars ---------- */

function SheetBar() {
  return (
    <div className="flex h-[31px] shrink-0 border-b border-[#c6c6c6]">
      <svg width="109" height="30" viewBox="0 1077 109 30" className="shrink-0"><path d="M34 1086v11.500l-6-5.500zM60 1086v11.500l6-5.500z" fill="#c3c3c3" /></svg>
      <div className="-mt-px flex h-[28px] w-[98px] items-center justify-center border-x border-b-2 border-x-[#9b9b9b] border-b-[#217346] bg-white pr-[2px] text-[21px] text-[#217346]"><Fit w={69}>Sheet1</Fit></div>
      <svg width="886" height="30" viewBox="207 1077 886 30" className="shrink-0" fill="none">
        <circle cx="253" cy="1092" r="10.500" stroke="#777" strokeWidth="1.200" />
        <path d="M248 1092h10M253 1087v10" stroke="#777" strokeWidth="1.800" />
        <path d="M1074 1085h3M1074 1091.500h3M1074 1097.500h3" stroke="#b5b5b5" strokeWidth="3" />
      </svg>
      <div className="mt-[2px] flex h-[25px] w-[678px] bg-[#dadada]">
        <div className="flex w-[25px] items-center justify-center border border-[#c3c3c3] bg-white"><svg width="6" height="11"><path d="M6 0v11L0 5.500z" fill="#777" /></svg></div>
        <div className="w-[583px] border border-[#ababab] bg-white" />
        <div className="flex-1" />
        <div className="flex w-[24px] items-center justify-center border border-[#c3c3c3] bg-white"><svg width="6" height="11"><path d="M0 0v11l6-5.500z" fill="#777" /></svg></div>
      </div>
    </div>
  );
}

function StatusBar() {
  return (
    <div className="flex h-[32px] shrink-0 items-center bg-[#f3f3f3] text-[18px] text-[#333]">
      <Gap w={8} />
      <Fit w={72}>準備完了</Fit>
      <svg width="60" height="32" viewBox="80 1108 60 32" fill="none">
        <path d="M103.500 1116.500h17v15h-17z" fill="#fff" stroke="#666" />
        <path d="M110 1115h11v4h-11z" fill="#666" />
        <path d="M106 1123.500h12M106 1126.500h12M106 1129.500h12" stroke="#666" strokeDasharray="3 1.500" />
        <circle cx="105.500" cy="1117.500" r="4.500" fill="#666" />
      </svg>
      <svg className="ml-auto" width="336" height="32" viewBox="1404 1108 336 32" fill="none">
        <path d="M1404 1108h45v32h-45z" fill="#c5c5c5" />
        <path d="M1417.500 1114.500h18v18h-18zM1423.500 1114v18M1429.500 1114v18M1417 1120.500h18M1417 1126.500h18" stroke="#6a6a6a" strokeWidth="1.200" />
        <path d="M1462.500 1114.500h18v18h-18zM1466.500 1117.500h10v12h-10zM1468.500 1120.500h6M1468.500 1123.500h6M1468.500 1126.500h6" stroke="#6a6a6a" strokeWidth="1.200" />
        <path d="M1507.500 1114.500h18v18h-18zM1507.500 1124.500h12v-10M1513.500 1114v10" stroke="#6a6a6a" strokeWidth="1.200" />
        <path d="M1545 1123.500h11" stroke="#666" strokeWidth="2.600" />
        <path d="M1562 1123h148" stroke="#ababab" strokeWidth="1.800" />
        <path d="M1632 1115h8v17h-8z" fill="#666" />
        <path d="M1716 1123.500h11M1721.500 1118v11" stroke="#666" strokeWidth="2" />
      </svg>
      <Fit w={52} className="mr-[8px]">100%</Fit>
    </div>
  );
}

export default function App() {
  return (
    <div className={'relative flex h-[1140px] w-[1800px] flex-col overflow-hidden bg-[#e6e6e6] ' + UI}>
      <div className="h-[96px] shrink-0 bg-[#217346]">
        <TitleBar />
        <TabBar />
      </div>
      <Ribbon />
      <FormulaBar />
      <div className="flex h-[791px] shrink-0 items-start pt-[15px]">
        <Sheet />
        <VScroll />
      </div>
      <div className="-mt-px h-px w-[1770px] shrink-0 bg-[#9b9b9b]" />
      <SheetBar />
      <StatusBar />
      <RangeOutlines />
      <Chart />
      <ChartButtons />
      <AddElementMenu />
      <ErrorBarMenu />
      <svg className="pointer-events-none absolute left-[140px] top-[400px]" width="60" height="110" viewBox="140 400 60 110">
        <path d="M150 411.500L171 428q1.500 3.500-2 3.500L163.500 431.500 185.800 500 154 434.500 150 438.500q-3 1.500-3-2z" fill="#e60000" stroke="#b30000" strokeWidth="0.700" strokeLinejoin="round" />
      </svg>
    </div>
  );
}
